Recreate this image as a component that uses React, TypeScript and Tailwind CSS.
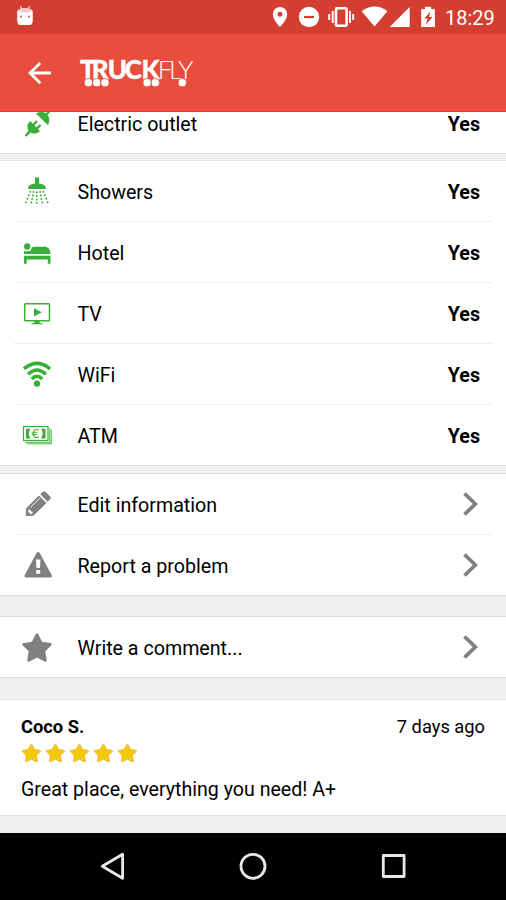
import { ReactNode } from "react";

interface RowProps {
  icon: ReactNode;
  label: string;
  value?: string;
  last?: boolean;
}

function Icon({ children }: { children: ReactNode }) {
  return (
    <svg viewBox="0 0 30 30" fill="currentColor" className="w-[30px] h-[30px] shrink-0 overflow-visible">
      {children}
    </svg>
  );
}

function PlugIcon() {
  return (
    <Icon>
      <path d="M14 5.500 L26 17.200 C28 13 27.500 9.500 25.500 7 L28.500 4 L27 2.500 L23.800 5.300 C21 3.500 17.500 3.800 14 5.500Z" />
      <path d="M8.200 13 L18 23 C15 25.800 11.500 26.300 8.700 24.500 L4.300 28.800 L2.700 27.200 L6.700 22.600 C4.600 19.500 5 16 8.200 13Z" />
      <path d="M10.500 17.500 L15 13 M14 21.500 L18.500 17" stroke="currentColor" strokeWidth="2.400" />
    </Icon>
  );
}

const dropRows = [
  { y: 16, gap: 3.3 },
  { y: 19.5, gap: 4 },
  { y: 23, gap: 4.7 },
  { y: 26.5, gap: 5.4 },
];

function ShowerIcon() {
  return (
    <Icon>
      <path d="M13 1.500h4V7.500c4 .2 7 2 7 5.500H6c0-3.500 3-5.300 7-5.500Z" />
      {dropRows.map(({ y, gap }) =>
        [-2, -1, 0, 1, 2].map((i) => (
          <circle key={`${y}-${i}`} cx={14.8 + i * gap} cy={y + (i === 0 ? 0.5 : 0) - (Math.abs(i) === 2 ? 0.3 : 0)} r="0.95" />
        ))
      )}
    </Icon>
  );
}

function BedIcon() {
  return (
    <Icon>
      <circle cx="5.200" cy="9.500" r="3.200" />
      <path d="M2 14.200h5.500c2 0 1.500-4.400 4-4.400H22c4 0 6.500 2.500 6.500 7.200H2Z" />
      <path d="M2 18.800h26.500v8h-2.700v-4.300H4.700v4.300H2Z" />
    </Icon>
  );
}

function TvIcon() {
  return (
    <Icon>
      <rect x="2.700" y="5.700" width="24.800" height="17" rx="0.800" fill="none" stroke="currentColor" strokeWidth="1.500" />
      <path d="M12 10.200 19.800 14.300 12 18.400ZM12.500 23h5v1.700c1.500.2 3 .6 3.800 1.600H8.700c.8-1 2.300-1.400 3.800-1.600Z" />
    </Icon>
  );
}

function WifiIcon() {
  return (
    <Icon>
      <g fill="none" stroke="currentColor" strokeWidth="3.500">
        <path d="M2 9.800 Q15 -1 28 9.800" />
        <path d="M6 15.200 Q15 6.800 24 15.200" />
        <path d="M9.800 20 Q15 14.600 20.200 20" />
      </g>
      <circle cx="15" cy="24.600" r="3.200" />
    </Icon>
  );
}

function CashIcon() {
  return (
    <Icon>
      <g fill="none" stroke="currentColor">
        <rect x="1.500" y="6.500" width="24.500" height="14" strokeWidth="1.200" />
        <path d="M27.800 8v14.300H3M29.300 9.500v14.300H5" strokeWidth="0.900" />
      </g>
      <path d="M4 8.700h4.500c-2.200 3-2.200 6.700 0 9.700H4ZM23.500 8.700H19c2.200 3 2.200 6.700 0 9.700h4.500Z" />
      <path d="M16.800 10.300c-3.400-2-5.500.2-5.500 3.200s2.200 5.200 5.500 3.200M9.600 12.700h5.700M9.600 14.500h5.200" fill="none" stroke="currentColor" strokeWidth="1.100" />
    </Icon>
  );
}

function PencilIcon() {
  return (
    <Icon>
      <path d="M4 19.500 17 6.500 24.500 14 11.500 26.700 3.800 27Z" />
      <path d="M18.300 5.300 20.700 3c1-.9 2-.9 3 0l4.400 4.400c.9 1 .9 2 0 2.900l-2.400 2.500Z" />
      <path d="M8.500 18.500 18 9" stroke="#fff" strokeWidth="0.900" />
      <path d="m6.700 20.300 1.700.4.500 1.500 1.500.5.400 1.700-2.300.7-2.500-2.500Z" fill="#fff" />
    </Icon>
  );
}

function WarningIcon() {
  return (
    <Icon>
      <path d="M14.700 2.800c.7-1.200 2.200-1.200 2.900 0L29.600 25c.7 1.200 0 2.400-1.400 2.400H4.100c-1.400 0-2.100-1.200-1.400-2.400Z" />
      <path d="M14 9.500h4.400l-.4 8.500h-3.600ZM14.200 20h4v3.700h-4Z" fill="#fff" />
    </Icon>
  );
}

const starPath =
  "M13.600 2.200c.7-1.300 2-1.300 2.700 0l3.700 7.500 8.300 1.200c1.500.2 2 1.500.9 2.500l-5.900 5.900 1.400 8.400c.2 1.700-.8 2.400-2.200 1.700L15 25.500l-7.500 3.900c-1.400.7-2.400 0-2.200-1.700l1.400-8.400L.8 13.400c-1.100-1-.6-2.300.9-2.500L10 9.700Z";

function ChevronIcon() {
  return (
    <svg viewBox="0 0 15 24" fill="none" stroke="#808080" strokeWidth="3.800" className="w-[15px] h-6 mr-[14px]">
      <path d="M1.500 1.500 12.300 12 1.500 22.500" />
    </svg>
  );
}

function Row({ icon, label, value, last }: RowProps) {
  return (
    <div className={last ? "h-[61px] w-full shrink-0 border-b border-[#dcdcdc] bg-white px-[14px]" : "h-[61px] w-full bg-white px-[14px]"}>
      <div className={last ? "h-full flex items-center pl-2" : "h-full flex items-center pl-2 border-b border-[#ededed]"}>
        {icon}
        <span className="ml-[25.500px] flex-1 text-[19.650px] leading-6 pt-1">{label}</span>
        {value ? <span className="mr-[12px] pt-1 text-[19.700px] leading-6 font-bold">{value}</span> : <ChevronIcon />}
      </div>
    </div>
  );
}

function Green({ children }: { children: ReactNode }) {
  return <span className="text-[#3aaf37]">{children}</span>;
}

function Gray({ children }: { children: ReactNode }) {
  return <span className="text-[#808080]">{children}</span>;
}

function StatusBar() {
  return (
    <div className="h-[34px] bg-[#d23f31] text-white flex items-center justify-between pl-4 pr-[10px]">
      <svg viewBox="0 0 18 22" className="w-[18px] h-[22px] mb-0.5" fill="#fff">
        <path d="M4.500 1 6 5M13.500 1 12 5" stroke="#fff" strokeWidth="1" />
        <path d="M1.200 7c0-5 15.600-5 15.600 0v8c0 3-1 5-3 5H4.200c-2 0-3-2-3-5Z" />
        <ellipse cx="9" cy="5.500" rx="6.800" ry="2" fill="#f5cac5" />
        <circle cx="5" cy="11.500" r="1" fill="#d23f31" />
        <circle cx="13" cy="11.500" r="1" fill="#d23f31" />
      </svg>
      <div className="flex items-center">
        <svg viewBox="272 0 170 34" className="w-[170px] h-[34px]" fill="#fff">
          <path fillRule="evenodd" d="M280 7a7.200 7.200 0 0 0-7.200 7.200C272.800 19.500 280 27 280 27s7.200-7.500 7.200-12.800A7.200 7.200 0 0 0 280 7Zm0 4.700a2.500 2.500 0 1 1 0 5 2.500 2.500 0 0 1 0-5Z" />
          <circle cx="309" cy="17" r="10.200" />
          <path d="M304 17h10" stroke="#d23f31" strokeWidth="2.200" />
          <rect x="336" y="8.300" width="10.600" height="17.400" rx="1" fill="none" stroke="#fff" strokeWidth="2.600" />
          <path d="M332.700 11v12M329.200 14v6M350 11v12M353.200 14v6" stroke="#fff" strokeWidth="1.900" />
          <path d="M361.700 11.300C369 5 380.500 5 387.300 11.300L374.500 26.500Z" />
          <path d="M409.700 7v20h-20Z" />
          <path d="M421.200 9h3.700V6.700h6.300V9h3.700v18h-13.700Z" />
          <path d="m430.300 11.500-6 7h3.200l-1.500 6 6.500-7.500h-3.500Z" fill="#d23f31" />
        </svg>
        <span className="w-[51px] ml-[3px] pt-px text-[20px] leading-6 whitespace-nowrap">18:29</span>
      </div>
    </div>
  );
}

const wheels = [88.4, 96.7, 105, 147.1, 155.3, 182.3];

function Toolbar() {
  return (
    <header className="h-[78px] bg-[#e84d3d] border-b border-[#e53a21] flex items-center">
      <svg viewBox="0 34 220 78" className="w-[220px] h-[78px]">
        <path d="M51 73H30.500M40.300 63 30 73l10.300 10.200" fill="none" stroke="#fff" strokeWidth="2.800" />
        <g fill="#fff" fontFamily="Lato" fontSize="26">
          <text x="80 91.800 107.800 124.800 141.500" y="78.700" fontWeight="900" stroke="#fff" strokeWidth="0.300">TRUCK</text>
          <text x="157.800 169 178" y="78.700" fontWeight="300">FLY</text>
        </g>
        {wheels.map((x) => (
          <circle key={x} cx={x} cy="82.700" r="4.100" fill="#fff" stroke="#e84d3d" strokeWidth="0.800" />
        ))}
      </svg>
    </header>
  );
}

function Review() {
  return (
    <article className="h-[116px] bg-white border-b border-[#e2e2e2] px-[21px] pt-[15px]">
      <div className="flex justify-between text-[18.300px] leading-6">
        <span className="font-bold">Coco S.</span>
        <span>7 days ago</span>
      </div>
      <div className="flex gap-1 mt-1">
        {[1, 2, 3, 4, 5].map((n) => (
          <svg key={n} viewBox="-1.500 0 32 31" className="w-5 h-5">
            <path d={starPath} fill="#f6c906" stroke="#f2a33a" strokeWidth="1" />
          </svg>
        ))}
      </div>
      <p className="mt-[15px] text-[19.600px] leading-6">Great place, everything you need! A+</p>
    </article>
  );
}

function NavBar() {
  return (
    <nav className="h-[67px] bg-black flex justify-center">
      <svg viewBox="0 833 506 67" className="w-[506px] h-[67px]" fill="none" stroke="#e8e8e8" strokeWidth="2.800" strokeLinejoin="round">
        <path d="M102.300 866.300 122.600 854.300V878.300Z" />
        <circle cx="253" cy="866.300" r="12" />
        <rect x="383.300" y="855.500" width="20.800" height="21" />
      </svg>
    </nav>
  );
}

export default function App() {
  return (
    <div className="w-[506px] h-[900px] overflow-hidden bg-[#efefef] text-black font-['Roboto',sans-serif]">
      <StatusBar />
      <Toolbar />
      <main className="h-[721px]">
        <section className="h-[42px] overflow-hidden flex items-end">
          <Row icon={<Green><PlugIcon /></Green>} label="Electric outlet" value="Yes" last />
        </section>
        <div className="h-[7px] border-b border-[#e5e5e5]" />
        <section>
          <Row icon={<Green><ShowerIcon /></Green>} label="Showers" value="Yes" />
          <Row icon={<Green><BedIcon /></Green>} label="Hotel" value="Yes" />
          <Row icon={<Green><TvIcon /></Green>} label="TV" value="Yes" />
          <Row icon={<Green><WifiIcon /></Green>} label="WiFi" value="Yes" />
          <Row icon={<Green><CashIcon /></Green>} label="ATM" value="Yes" last />
        </section>
        <div className="h-2 border-b border-[#dedede]" />
        <section>
          <Row icon={<Gray><PencilIcon /></Gray>} label="Edit information" />
          <Row icon={<Gray><WarningIcon /></Gray>} label="Report a problem" last />
        </section>
        <div className="h-[21px] border-b border-[#dcdcdc]" />
        <Row icon={<Gray><Icon><path d={starPath} /></Icon></Gray>} label="Write a comment..." last />
        <div className="h-[22px] border-b border-[#e2e2e2]" />
        <Review />
      </main>
      <NavBar />
    </div>
  );
}
